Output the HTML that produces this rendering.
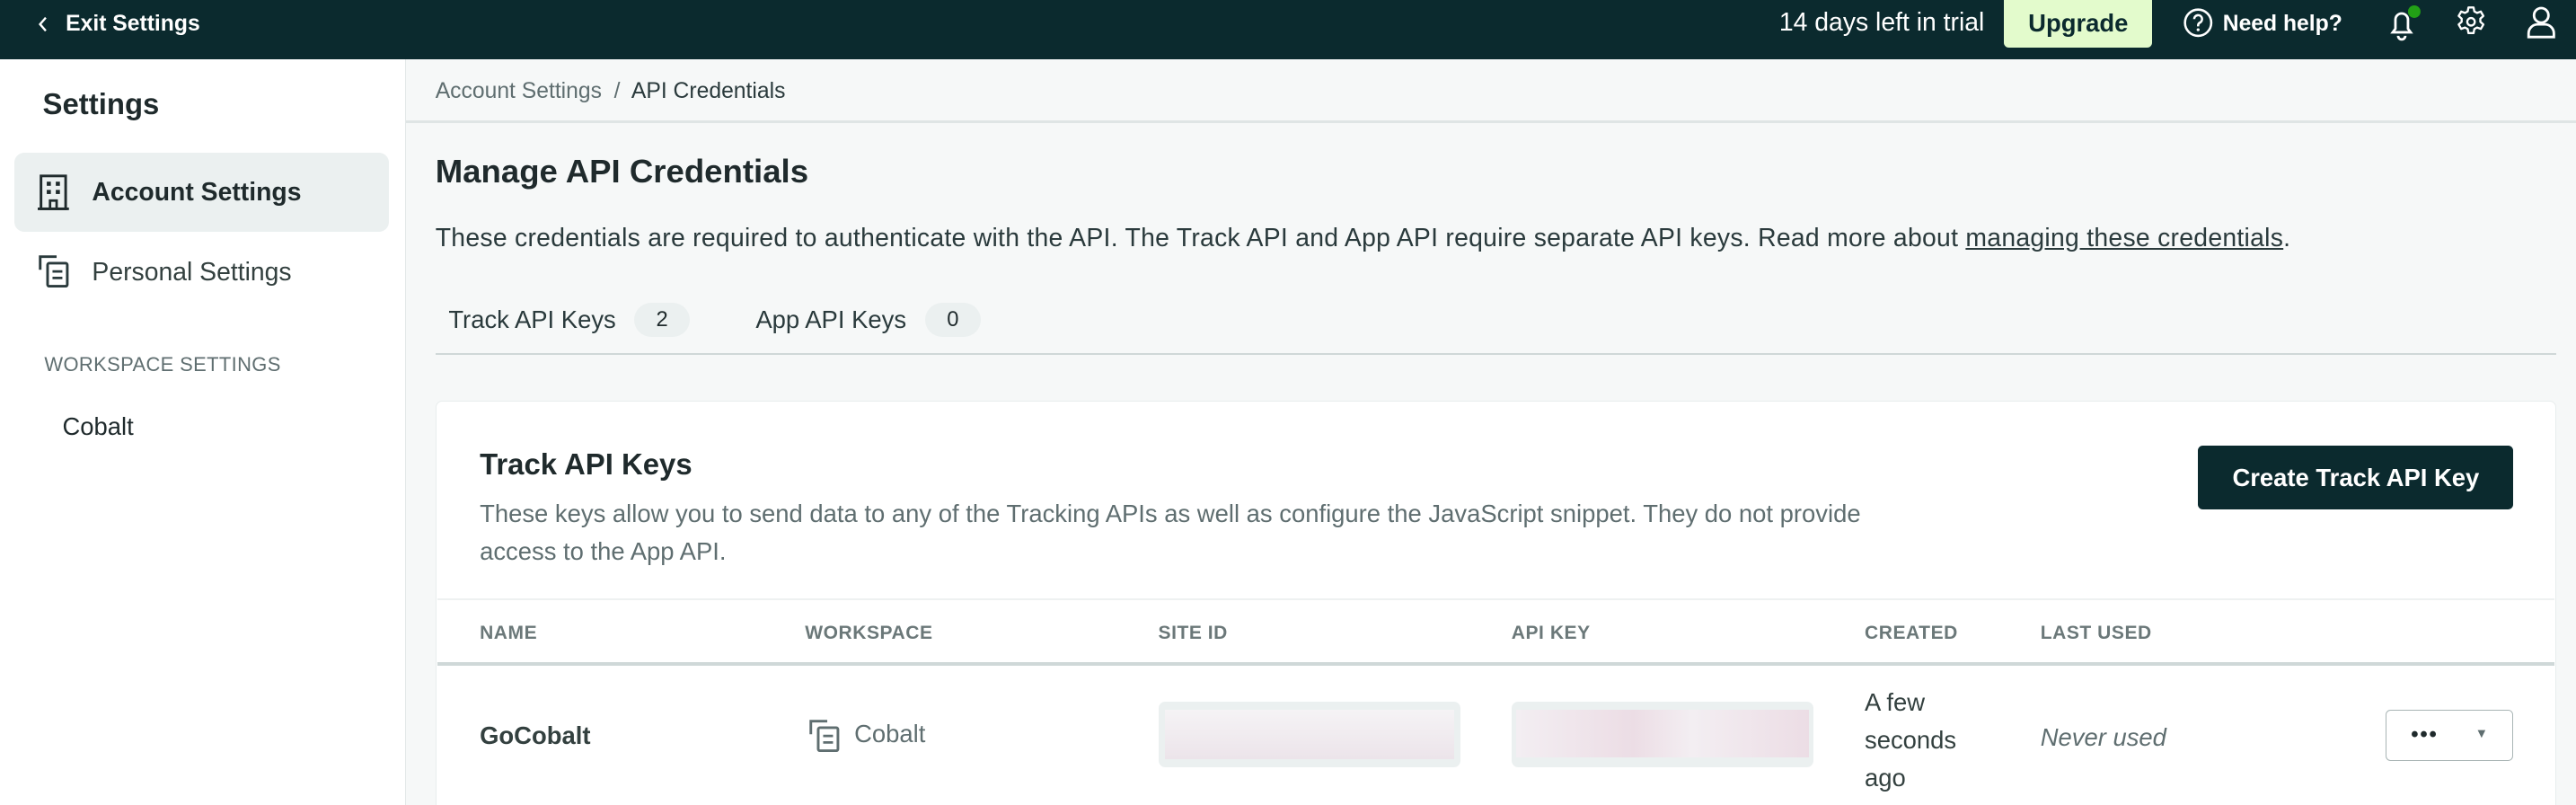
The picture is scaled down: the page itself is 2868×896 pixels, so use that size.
<!DOCTYPE html>
<html><head><meta charset="utf-8"><style>
*{box-sizing:border-box;margin:0;padding:0}
html,body{width:2868px;height:896px;overflow:hidden;background:#f6f8f8}
#w{zoom:1.82908;width:1568px;height:490px;position:relative;font-family:"Liberation Sans",sans-serif;color:#1f2a2c}
.a{position:absolute;white-space:nowrap}
#top{position:absolute;left:0;top:0;width:1568px;height:36px;background:#0b2a2e;color:#fff}
#side{position:absolute;left:0;top:36px;width:247px;height:454px;background:#fff;border-right:1px solid #e3e8e8}
.g{color:#5f6e70}
</style></head><body><div id="w">
<div id="top">
<svg class="a" style="left:22px;top:9px" width="10" height="12" viewBox="0 0 10 12"><path d="M6 2L2.5 6L6 10" stroke="#fff" stroke-width="1.3" fill="none"/></svg>
<div class="a" style="left:40px;top:7px;font-size:13.5px;font-weight:bold">Exit Settings</div>
<div class="a" style="left:1083px;top:5px;font-size:15.5px">14 days left in trial</div>
<div class="a" style="left:1220px;top:0;width:90px;height:29px;background:#e3fbcc;border-radius:0 0 3px 3px;color:#0b2a2e;font-size:15px;font-weight:bold;text-align:center;line-height:28px">Upgrade</div>
<svg class="a" style="left:1328px;top:4px" width="20" height="20" viewBox="0 0 20 20"><circle cx="10" cy="10" r="8" stroke="#fff" stroke-width="1.4" fill="none"/><path d="M7.6 7.8a2.4 2.4 0 1 1 3.4 2.2c-.7.4-1 .8-1 1.6v.6" stroke="#fff" stroke-width="1.4" fill="none"/><circle cx="10" cy="14.3" r=".9" fill="#fff"/></svg>
<div class="a" style="left:1353px;top:7px;font-size:13.5px;font-weight:bold">Need help?</div>
<svg class="a" style="left:1450px;top:2px" width="24" height="24" viewBox="0 0 22 22"><path d="M6 16h10l-1.5-2V9a3.5 3.5 0 0 0-7 0v5z" stroke="#fff" stroke-width="1.4" fill="none"/><path d="M9 18a2 2 0 0 0 4 0" stroke="#fff" stroke-width="1.4" fill="none"/><circle cx="18" cy="4.5" r="3.5" fill="#22a016"/></svg>
<svg class="a" style="left:1493px;top:3px" width="22" height="22" viewBox="0 0 24 24"><path d="M10.3 2h3.4l.5 2.6 1.8 1 2.5-.9 1.7 2.9-2 1.8v2.1l2 1.8-1.7 2.9-2.5-.9-1.8 1-.5 2.7h-3.4l-.5-2.7-1.8-1-2.5.9-1.7-2.9 2-1.8v-2.1l-2-1.8 1.7-2.9 2.5.9 1.8-1z" stroke="#fff" stroke-width="1.4" fill="none" stroke-linejoin="round"/><circle cx="12" cy="11.5" r="2.5" stroke="#fff" stroke-width="1.4" fill="none"/></svg>
<svg class="a" style="left:1537px;top:3px" width="20" height="22" viewBox="0 0 18 20"><circle cx="9" cy="6" r="4" stroke="#fff" stroke-width="1.4" fill="none"/><path d="M2 18v-2a5 5 0 0 1 5-5h4a5 5 0 0 1 5 5v2z" stroke="#fff" stroke-width="1.4" fill="none"/></svg>
</div>
<div id="side">
<div class="a" style="left:26px;top:17px;font-size:18px;font-weight:bold">Settings</div>
<div class="a" style="left:9px;top:57px;width:228px;height:48px;background:#ebf0f0;border-radius:6px"></div>
<svg class="a" style="left:23px;top:70px" width="20" height="22" viewBox="0 0 20 22"><rect x="2" y="1" width="15" height="20" stroke="#1f2a2c" stroke-width="1.6" fill="none"/><rect x="5.5" y="4.5" width="2.5" height="2.5" fill="#1f2a2c"/><rect x="11" y="4.5" width="2.5" height="2.5" fill="#1f2a2c"/><rect x="5.5" y="9.5" width="2.5" height="2.5" fill="#1f2a2c"/><rect x="11" y="9.5" width="2.5" height="2.5" fill="#1f2a2c"/><path d="M7.5 21v-5h4v5" stroke="#1f2a2c" stroke-width="1.5" fill="none"/><path d="M0 21h19" stroke="#1f2a2c" stroke-width="1.6"/></svg>
<div class="a" style="left:56px;top:72px;font-size:15.5px;font-weight:bold">Account Settings</div>
<svg class="a" style="left:23px;top:118px" width="20" height="22" viewBox="0 0 20 22"><path d="M1.5 10V2h10" stroke="#2a3a3c" stroke-width="1.6" fill="none"/><rect x="6" y="6" width="12" height="14" rx="1" stroke="#2a3a3c" stroke-width="1.6" fill="none"/><path d="M9 11h6M9 15h6" stroke="#2a3a3c" stroke-width="1.5"/></svg>
<div class="a" style="left:56px;top:121px;font-size:15.5px;color:#33403f">Personal Settings</div>
<div class="a g" style="left:27px;top:179px;font-size:12px;letter-spacing:.2px">WORKSPACE SETTINGS</div>
<div class="a" style="left:38px;top:215px;font-size:15px">Cobalt</div>
</div>
<div class="a g" style="left:265px;top:48px;font-size:13.5px">Account Settings&nbsp; /&nbsp; <span style="color:#2a3a3c">API Credentials</span></div>
<div class="a" style="left:247px;top:73px;width:1321px;height:2px;background:#dfe5e5"></div>
<div class="a" style="left:265px;top:93px;font-size:20px;font-weight:bold">Manage API Credentials</div>
<div class="a" style="left:265px;top:136px;font-size:15.5px;color:#2a3a3c;letter-spacing:.15px">These credentials are required to authenticate with the API. The Track API and App API require separate API keys. Read more about <span style="text-decoration:underline">managing these credentials</span>.</div>
<div class="a" style="left:273px;top:186px;font-size:15px;color:#2a3a3c">Track API Keys</div>
<div class="a" style="left:386px;top:184px;width:34px;height:21px;border-radius:11px;background:#ebf0f0;font-size:13px;text-align:center;line-height:21px">2</div>
<div class="a" style="left:460px;top:186px;font-size:15px;color:#2a3a3c">App API Keys</div>
<div class="a" style="left:563px;top:184px;width:34px;height:21px;border-radius:11px;background:#ebf0f0;font-size:13px;text-align:center;line-height:21px">0</div>
<div class="a" style="left:265px;top:215px;width:1291px;height:1px;background:#cfd8d8"></div>
<div class="a" style="left:265px;top:244px;width:1291px;height:260px;background:#fff;border:1px solid #e8eded;border-radius:4px"></div>
<div class="a" style="left:292px;top:272px;font-size:18px;font-weight:bold">Track API Keys</div>
<div class="a g" style="left:292px;top:301px;font-size:15px;line-height:23px;white-space:normal;width:890px">These keys allow you to send data to any of the Tracking APIs as well as configure the JavaScript snippet. They do not provide access to the App API.</div>
<div class="a" style="left:1338px;top:271px;width:192px;height:39px;background:#0b2a2e;border-radius:3px;color:#fff;font-size:15px;font-weight:bold;text-align:center;line-height:39px">Create Track API Key</div>
<div class="a" style="left:266px;top:364px;width:1289px;height:1px;background:#eef1f1"></div>
<div class="a g" style="top:379px;left:0;font-size:11.5px;letter-spacing:.3px;font-weight:bold;color:#6b7879">
<span class="a" style="left:292px">NAME</span><span class="a" style="left:490px">WORKSPACE</span><span class="a" style="left:705px">SITE ID</span><span class="a" style="left:920px">API KEY</span><span class="a" style="left:1135px">CREATED</span><span class="a" style="left:1242px">LAST USED</span></div>
<div class="a" style="left:266px;top:403px;width:1289px;height:2px;background:#cfd8d8"></div>
<div class="a" style="left:292px;top:439px;font-size:15px;font-weight:bold;color:#33403f">GoCobalt</div>
<svg class="a" style="left:492px;top:437px" width="20" height="22" viewBox="0 0 20 22"><path d="M1.5 10V2h10" stroke="#5f6e70" stroke-width="1.6" fill="none"/><rect x="6" y="6" width="12" height="14" rx="1" stroke="#5f6e70" stroke-width="1.6" fill="none"/><path d="M9 11h6M9 15h6" stroke="#5f6e70" stroke-width="1.5"/></svg>
<div class="a g" style="left:520px;top:438px;font-size:15px">Cobalt</div>
<div class="a" style="left:705px;top:427px;width:184px;height:40px;background:#ebf0f0;border-radius:4px"><div style="margin:5px 4px;height:30px;background:linear-gradient(#f5f3f5,#ece4ea)"></div></div>
<div class="a" style="left:920px;top:427px;width:184px;height:40px;background:#ebf0f0;border-radius:4px"><div style="margin:5px 3px;height:29px;background:linear-gradient(90deg,#f3eef2,#ecdde5 40%,#f3eef2 60%,#ecdde5)"></div></div>
<div class="a" style="left:1135px;top:416px;font-size:15px;line-height:23px;color:#33403f">A few<br>seconds<br>ago</div>
<div class="a g" style="left:1242px;top:440px;font-size:15px;font-style:italic">Never used</div>
<div class="a" style="left:1452px;top:432px;width:78px;height:31px;border:1px solid #a9b5b5;border-radius:3px;font-size:13px;line-height:29px"><span class="a" style="left:15px;top:0;font-weight:bold;letter-spacing:1px">•••</span><span class="a" style="left:54px;font-size:8px;color:#5f6e70">▼</span></div>
</div></body></html>
